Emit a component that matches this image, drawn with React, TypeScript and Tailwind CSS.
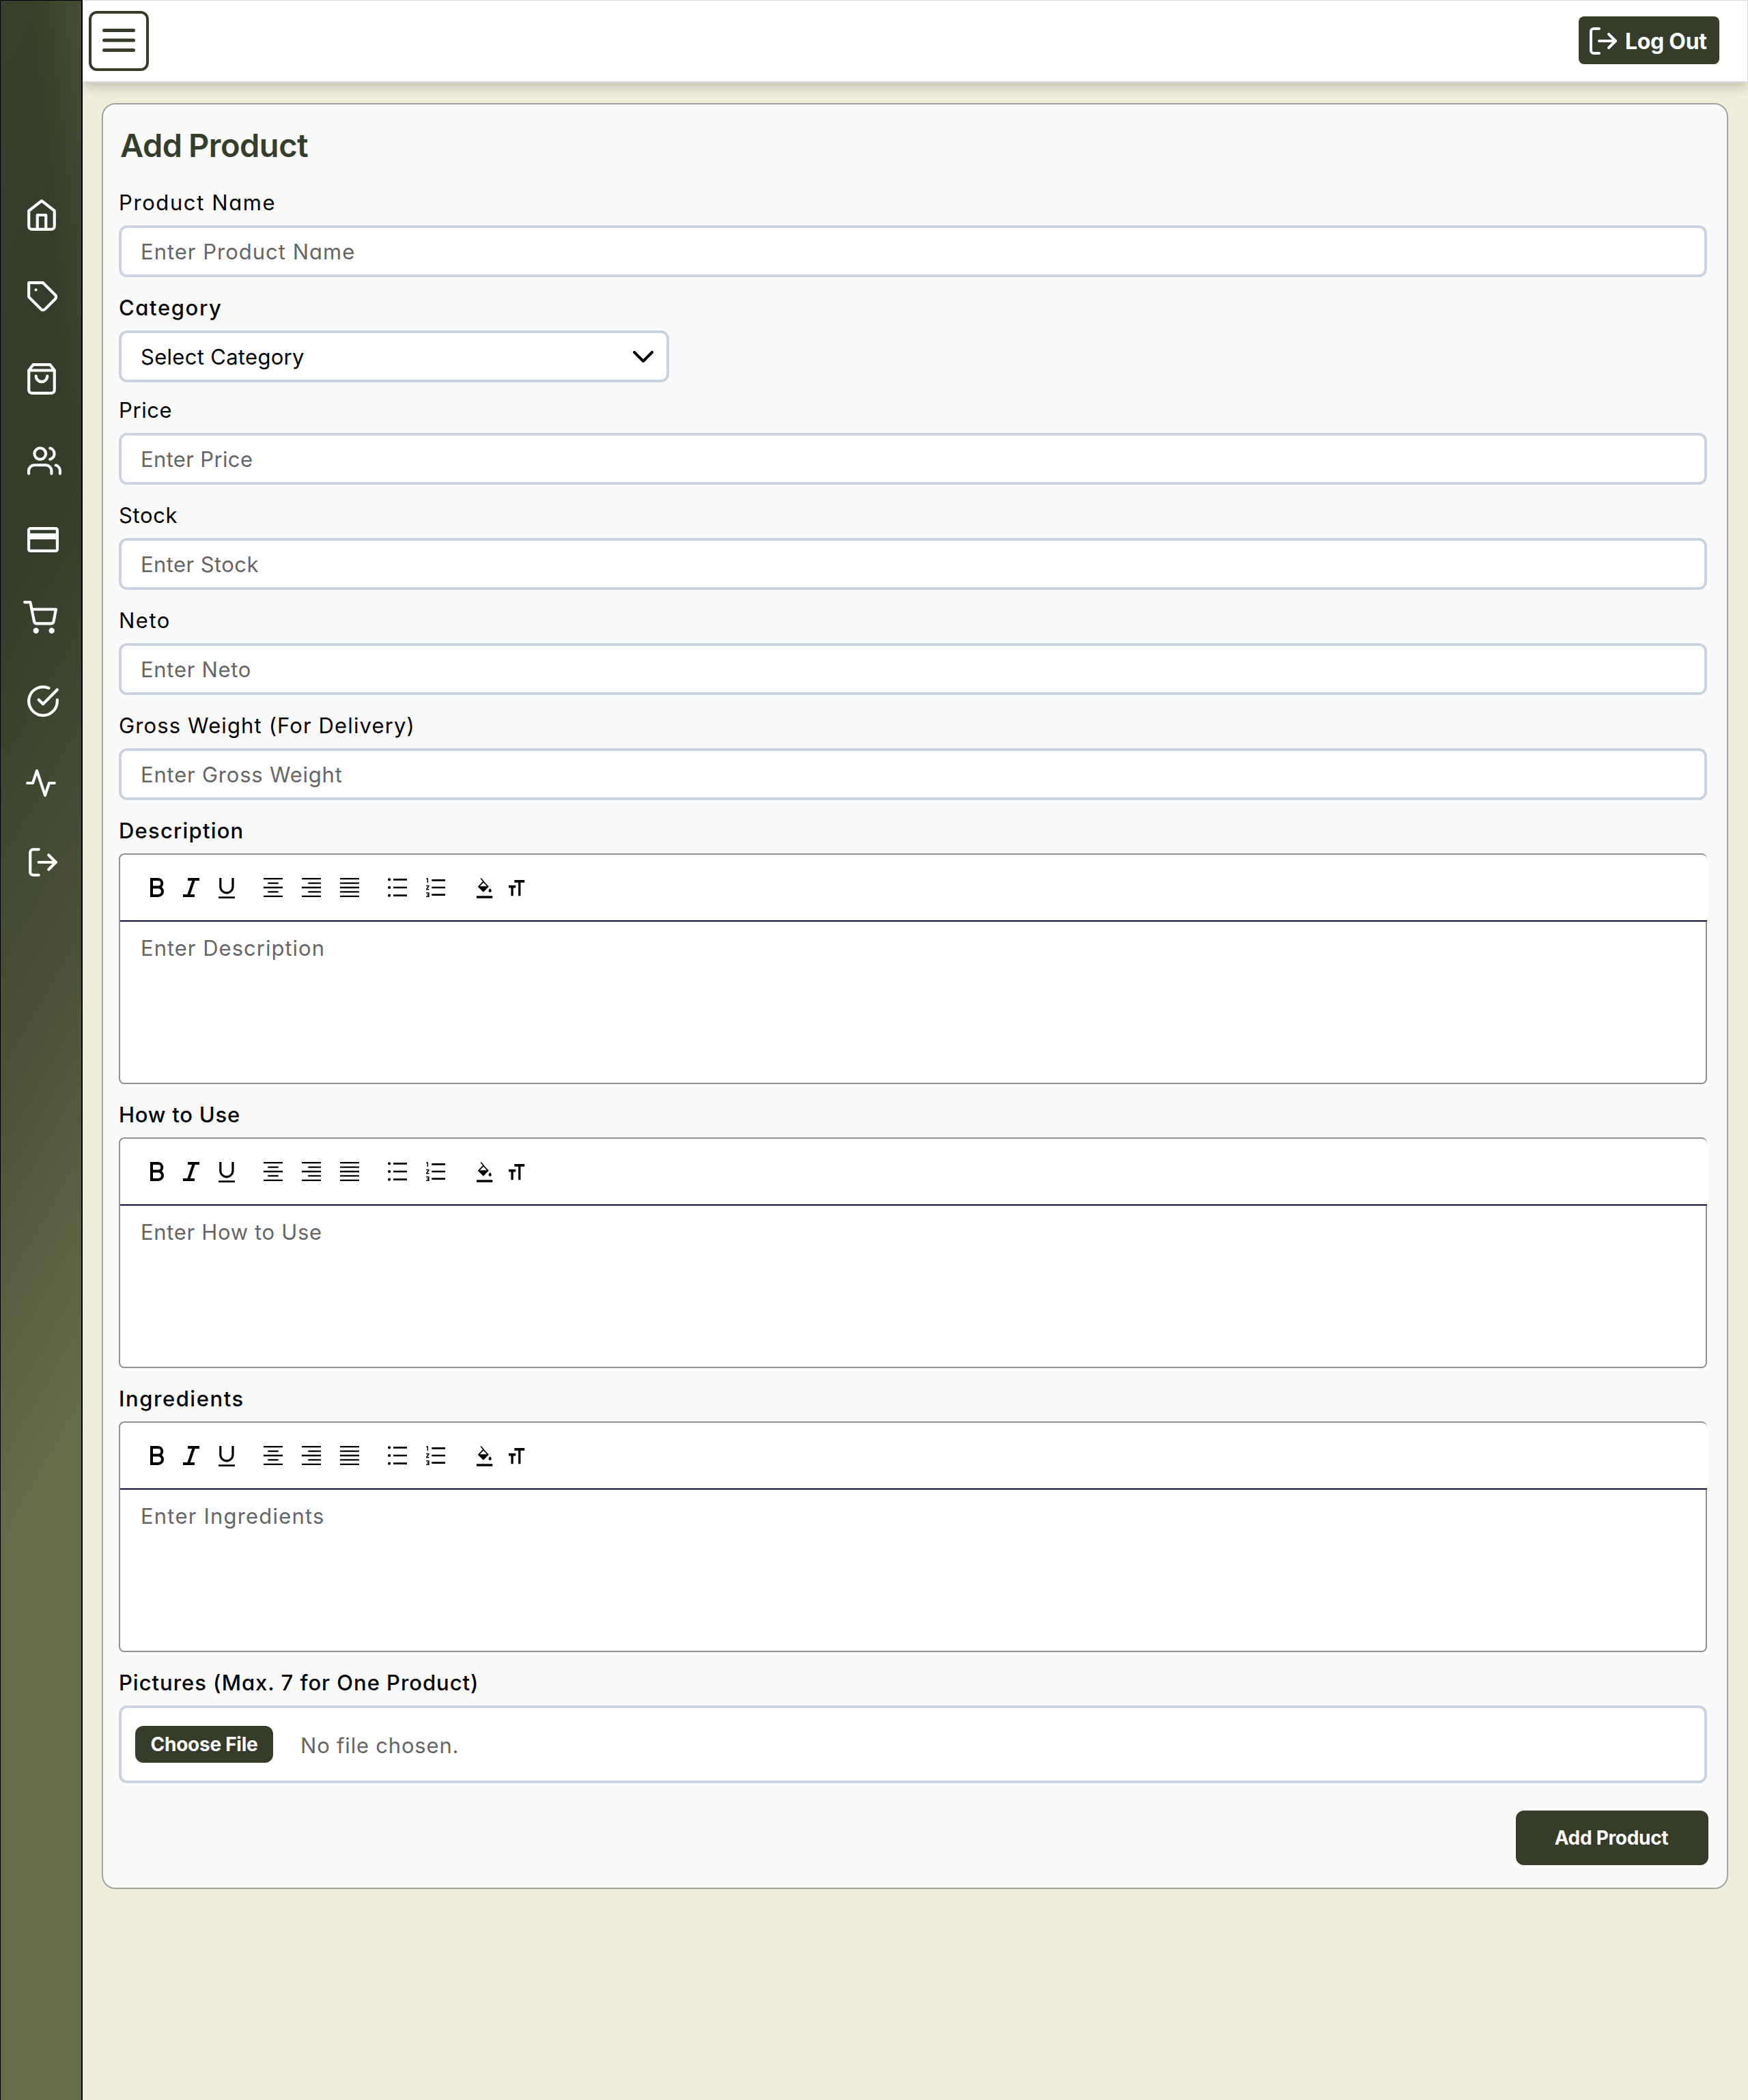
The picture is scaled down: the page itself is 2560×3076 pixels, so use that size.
import React from "react";

type StrokeIconProps = { className: string; children: React.ReactNode };

function StrokeIcon({ className, children }: StrokeIconProps) {
  return (
    <svg
      viewBox="0 0 24 24"
      fill="none"
      stroke="currentColor"
      strokeWidth="2"
      strokeLinecap="round"
      strokeLinejoin="round"
      className={"shrink-0 " + className}
    >
      {children}
    </svg>
  );
}

function LogOutShape() {
  return (
    <>
      <path d="M9 21H5a2 2 0 0 1-2-2V5a2 2 0 0 1 2-2h4" />
      <path d="M16 17l5-5-5-5" />
      <path d="M21 12H9" />
    </>
  );
}

function Sidebar() {
  return (
    <aside className="relative z-20 flex w-[121px] shrink-0 flex-col border-t border-r-2 border-l border-black bg-[linear-gradient(265deg,#454e30_0%,transparent_19%),linear-gradient(120deg,#383f2a_3%,#353c2a_15%,#353d2a_27%,#404830_38%,#4c5237_49%,#595e40_58%,#666d49_70%,#666d49_100%)] pt-[289px] text-white">
      <StrokeIcon className="ml-[35px] h-[50px] w-[50px]">
        <path d="M3 9l9-7 9 7v11a2 2 0 0 1-2 2H5a2 2 0 0 1-2-2z" />
        <path d="M9 22V12h6v10" />
      </StrokeIcon>
      <StrokeIcon className="mt-[70px] ml-[37px] h-[50px] w-[50px]">
        <path d="M20.59 13.41l-7.17 7.17a2 2 0 0 1-2.83 0L2 12V2h10l8.59 8.59a2 2 0 0 1 0 2.82z" />
        <path d="M7 7h.01" />
      </StrokeIcon>
      <StrokeIcon className="mt-[70px] ml-[35px] h-[50px] w-[50px]">
        <path d="M6 2L3 6v14a2 2 0 0 0 2 2h14a2 2 0 0 0 2-2V6l-3-4z" />
        <path d="M3 6h18" />
        <path d="M16 10a4 4 0 0 1-8 0" />
      </StrokeIcon>
      <StrokeIcon className="mt-[70px] ml-[39px] h-[50px] w-[50px]">
        <path d="M17 21v-2a4 4 0 0 0-4-4H5a4 4 0 0 0-4 4v2" />
        <circle cx="9" cy="7" r="4" />
        <path d="M23 21v-2a4 4 0 0 0-3-3.87" />
        <path d="M16 3.13a4 4 0 0 1 0 7.75" />
      </StrokeIcon>
      <svg viewBox="0 0 46 37" fill="none" className="mt-[72px] ml-[39px] h-[37px] w-[46px] shrink-0">
        <rect x="2.1" y="2.1" width="41.800" height="32.800" rx="2.5" stroke="currentColor" strokeWidth="4.200" />
        <path d="M2 13.6h42" stroke="currentColor" strokeWidth="8.600" />
      </svg>
      <StrokeIcon className="mt-[71px] ml-[33px] h-[50px] w-[50px]">
        <circle cx="9" cy="21" r="1" />
        <circle cx="20" cy="21" r="1" />
        <path d="M1 1h4l2.68 13.39a2 2 0 0 0 2 1.61h9.72a2 2 0 0 0 2-1.61L23 6H6" />
      </StrokeIcon>
      <StrokeIcon className="mt-[72px] ml-[37px] h-[50px] w-[50px]">
        <path d="M22 11.08V12a10 10 0 1 1-5.93-9.14" />
        <path d="M22 4L12 14.01l-3-3" />
      </StrokeIcon>
      <StrokeIcon className="mt-[71px] ml-[35px] h-[48px] w-[48px]">
        <path d="M22 12h-4l-3 9L9 3l-3 9H2" />
      </StrokeIcon>
      <StrokeIcon className="mt-[67px] ml-[37px] h-[50px] w-[50px]">
        <LogOutShape />
      </StrokeIcon>
    </aside>
  );
}

function Header() {
  return (
    <header className="relative z-10 flex h-[121px] shrink-0 items-start justify-between border-t border-r border-b-2 border-[#dadbdd] bg-white pt-[15px] pr-[41px] pl-[9px] shadow-[0_8px_16px_-2px_rgba(0,0,0,0.2)]">
      <button className="flex h-[88px] w-[88px] items-center justify-center rounded-[12px] border-4 border-[#353c2a]">
        <svg viewBox="0 0 48 34" className="mb-[2px] h-[34px] w-[48px]" stroke="#353c2a" strokeWidth="5" strokeLinecap="round">
          <path d="M2.5 2.5h43M2.5 17h43M2.5 31.5h43" />
        </svg>
      </button>
      <button className="mt-2 flex h-[70px] w-[206px] items-center rounded-[8px] bg-[#353c2a] pt-[2px] pl-3 text-white">
        <StrokeIcon className="h-[48px] w-[48px]">
          <LogOutShape />
        </StrokeIcon>
        <span className="mt-[2px] ml-[8px] text-[32px] leading-[48px] font-bold tracking-[-0.3px] whitespace-nowrap">Log Out</span>
      </button>
    </header>
  );
}

const labelBase =
  "mb-[9px] block h-[48px] text-[31px] leading-[48px] whitespace-nowrap text-black [font-feature-settings:'cv11'] ";
const hintBase = "text-[31px] leading-[48px] whitespace-nowrap text-[#666666] [font-feature-settings:'cv11'] ";

type FieldProps = { label: string; labelClass: string; hint: string; hintClass: string };

function TextField({ label, labelClass, hint, hintClass }: FieldProps) {
  return (
    <div>
      <label className={labelBase + labelClass}>{label}</label>
      <div className="flex h-[76px] items-center rounded-[12px] border-4 border-[#cbd3e0] bg-white pt-[2px] pl-[28px]">
        <span className={hintBase + hintClass}>{hint}</span>
      </div>
    </div>
  );
}

function ToolbarIcons() {
  const bars = "h-[30px] w-[28px] shrink-0";
  return (
    <>
      <svg viewBox="0 0 20 30" className="h-[30px] w-[20px] shrink-0" fill="none" stroke="#000" strokeWidth="4">
        <path d="M2 2h9.500a5.800 5.800 0 0 1 0 11.600H2M2 13.600h9.800a6.200 6.200 0 0 1 0 12.400H2zM2 0v28" />
      </svg>
      <svg viewBox="0 0 24 30" className="ml-7 h-[30px] w-[24px] shrink-0" fill="none" stroke="#000" strokeWidth="4">
        <path d="M7 2h17M0 26h17M15.800 3L8.200 25" />
      </svg>
      <svg viewBox="0 0 24 30" className="ml-7 h-[30px] w-[24px] shrink-0" fill="none" stroke="#000">
        <path d="M2.800 0v12.800a9.100 9.100 0 0 0 18.200 0V0" strokeWidth="3.200" />
        <path d="M0 28.600h24" strokeWidth="2.700" />
      </svg>
      <svg viewBox="0 0 28 30" className={"ml-[42px] " + bars} stroke="#000" strokeWidth="2.300">
        <path d="M0 1.200h28M6.300 7.600h15.400M0 14h28M6.300 20.400h15.400M0 26.800h28" />
      </svg>
      <svg viewBox="0 0 28 30" className={"ml-7 " + bars} stroke="#000" strokeWidth="2.300">
        <path d="M0 1.200h28M9.300 7.600H28M0 14h28M9.300 20.400H28M0 26.800h28" />
      </svg>
      <svg viewBox="0 0 28 30" className={"ml-7 " + bars} stroke="#000" strokeWidth="2.300">
        <path d="M0 1.200h28M0 7.600h28M0 14h28M0 20.400h28M0 26.800h28" />
      </svg>
      <svg viewBox="0 0 28 30" className={"ml-[42px] " + bars} stroke="#000" strokeWidth="2.700">
        <path d="M8 2.300h20M8 14h20M8 25.700h20" />
        <g stroke="none">
          <circle cx="2.100" cy="2.300" r="2.100" />
          <circle cx="2.100" cy="14" r="2.100" />
          <circle cx="2.100" cy="25.700" r="2.100" />
        </g>
      </svg>
      <svg viewBox="0 0 28 30" className={"ml-7 " + bars} fill="none" stroke="#000" strokeWidth="2.700">
        <path d="M8.300 3.300H28M8.300 14H28M8.300 24.700H28" />
        <path
          d="M0.300 0.900h2v6M0.200 11.500h3.600v0.700L0.800 16.300v0.500h3.700M0.200 22.100h3.700v5.200H0.200M1.400 24.700h2.500"
          strokeWidth="1.500"
        />
      </svg>
      <svg viewBox="0 0 24 30" className="ml-[46px] h-[30px] w-[24px] shrink-0" fill="none" stroke="#000">
        <path d="M6 0.500l4.200 4.700L3 12.800l6.800 6.800 6.800-6.800-6.800-7.600" strokeWidth="1.700" />
        <path d="M3 12.800h13.600l-6.800 7z" fill="#000" strokeWidth="1" />
        <path d="M19.700 15.200c1.300 1.600 2.100 2.700 2.100 3.700a2.100 2.100 0 0 1-4.200 0c0-1 .8-2.100 2.100-3.700z" fill="#000" stroke="none" />
        <path d="M0 28h23.300" strokeWidth="3.400" />
      </svg>
      <svg viewBox="0 0 24 30" className="ml-[23px] h-[30px] w-[24px] shrink-0" fill="none" stroke="#000">
        <path d="M8.300 4.900h15M0 12.600h10.200" strokeWidth="3.800" />
        <path d="M15.800 4v22.300M5.100 12v14.300" strokeWidth="3.300" />
      </svg>
    </>
  );
}

function RichTextField({ label, labelClass, hint, hintClass }: FieldProps) {
  return (
    <div>
      <label className={labelBase + "font-medium " + labelClass}>{label}</label>
      <div className="flex h-[98px] items-start rounded-t-[8px] border-t-2 border-l-2 border-[#929292] bg-white pt-[34px] pl-[44px]">
        <ToolbarIcons />
      </div>
      <div className="h-[2px] border-l-2 border-[#929292] bg-[#0e1048]" />
      <div className="h-[238px] rounded-b-[8px] border-x-2 border-b-2 border-[#929292] bg-white pt-[15px] pl-[30px]">
        <p className={hintBase + hintClass}>{hint}</p>
      </div>
    </div>
  );
}

export default function App() {
  return (
    <div className="flex h-[3076px] w-[2560px] overflow-hidden bg-[#efeeda] font-['Inter',sans-serif]">
      <Sidebar />
      <div className="flex min-w-0 flex-1 flex-col">
        <Header />
        <main className="mt-[30px] mr-[29px] ml-[28px] h-[2616px] rounded-[20px] border-2 border-[#a3a3a3] bg-[#fafafa] pt-[28px] pr-[29px] pl-[23px]">
          <h1 className="mb-[28px] pl-[2px] text-[47px] leading-[64px] font-semibold tracking-[-0.5px] [word-spacing:-2px] whitespace-nowrap text-[#353e2a]">
            Add Product
          </h1>
          <div className="flex flex-col gap-[21px]">
            <TextField label="Product Name" labelClass="tracking-[1.6px]" hint="Enter Product Name" hintClass="tracking-[1px]" />
            <div className="-mb-1">
              <label className={labelBase + "font-medium tracking-[1.61px]"}>Category</label>
              <div className="flex h-[76px] w-[806px] items-center justify-between rounded-[12px] border-4 border-[#cbd3e0] bg-white pr-[19px] pl-[28px]">
                <span className="pt-[1px] text-[31px] leading-[48px] tracking-[0.3px] whitespace-nowrap text-black">Select Category</span>
                <svg viewBox="0 0 30 17" className="h-[17px] w-[30px]" fill="none" stroke="#000" strokeWidth="4" strokeLinecap="round" strokeLinejoin="round">
                  <path d="M2 2l13 13L28 2" />
                </svg>
              </div>
            </div>
            <TextField label="Price" labelClass="tracking-[0.6px]" hint="Enter Price" hintClass="tracking-[0.35px]" />
            <TextField label="Stock" labelClass="tracking-[0.62px]" hint="Enter Stock" hintClass="tracking-[0.42px]" />
            <TextField label="Neto" labelClass="tracking-[1.5px]" hint="Enter Neto" hintClass="tracking-[0.7px]" />
            <TextField
              label="Gross Weight (For Delivery)"
              labelClass="tracking-[1.12px]"
              hint="Enter Gross Weight"
              hintClass="tracking-[0.78px]"
            />
            <RichTextField label="Description" labelClass="tracking-[1.2px]" hint="Enter Description" hintClass="tracking-[1px]" />
            <RichTextField label="How to Use" labelClass="tracking-[0.75px]" hint="Enter How to Use" hintClass="tracking-[0.67px]" />
            <RichTextField label="Ingredients" labelClass="tracking-[1.55px]" hint="Enter Ingredients" hintClass="tracking-[1.2px]" />
            <div>
              <label className={labelBase + "font-medium tracking-[0.97px]"}>Pictures (Max. 7 for One Product)</label>
              <div className="flex h-[114px] items-center rounded-[12px] border-4 border-[#cbd3e0] bg-white pl-[20px]">
                <button className="h-[54px] w-[202px] rounded-[12px] bg-[#353c2a] text-[28px] leading-[54px] font-bold tracking-[-0.27px] whitespace-nowrap text-white">
                  Choose File
                </button>
                <span className={hintBase + "mt-[3px] ml-[40px] tracking-[0.8px]"}>No file chosen.</span>
              </div>
            </div>
          </div>
          <div className="mt-[40px] -mr-[2px] flex justify-end">
            <button className="h-[80px] w-[282px] rounded-[12px] bg-[#353c2a] pr-[2px] text-center text-[28px] leading-[80px] font-bold tracking-[-0.31px] whitespace-nowrap text-white">
              Add Product
            </button>
          </div>
        </main>
      </div>
    </div>
  );
}
